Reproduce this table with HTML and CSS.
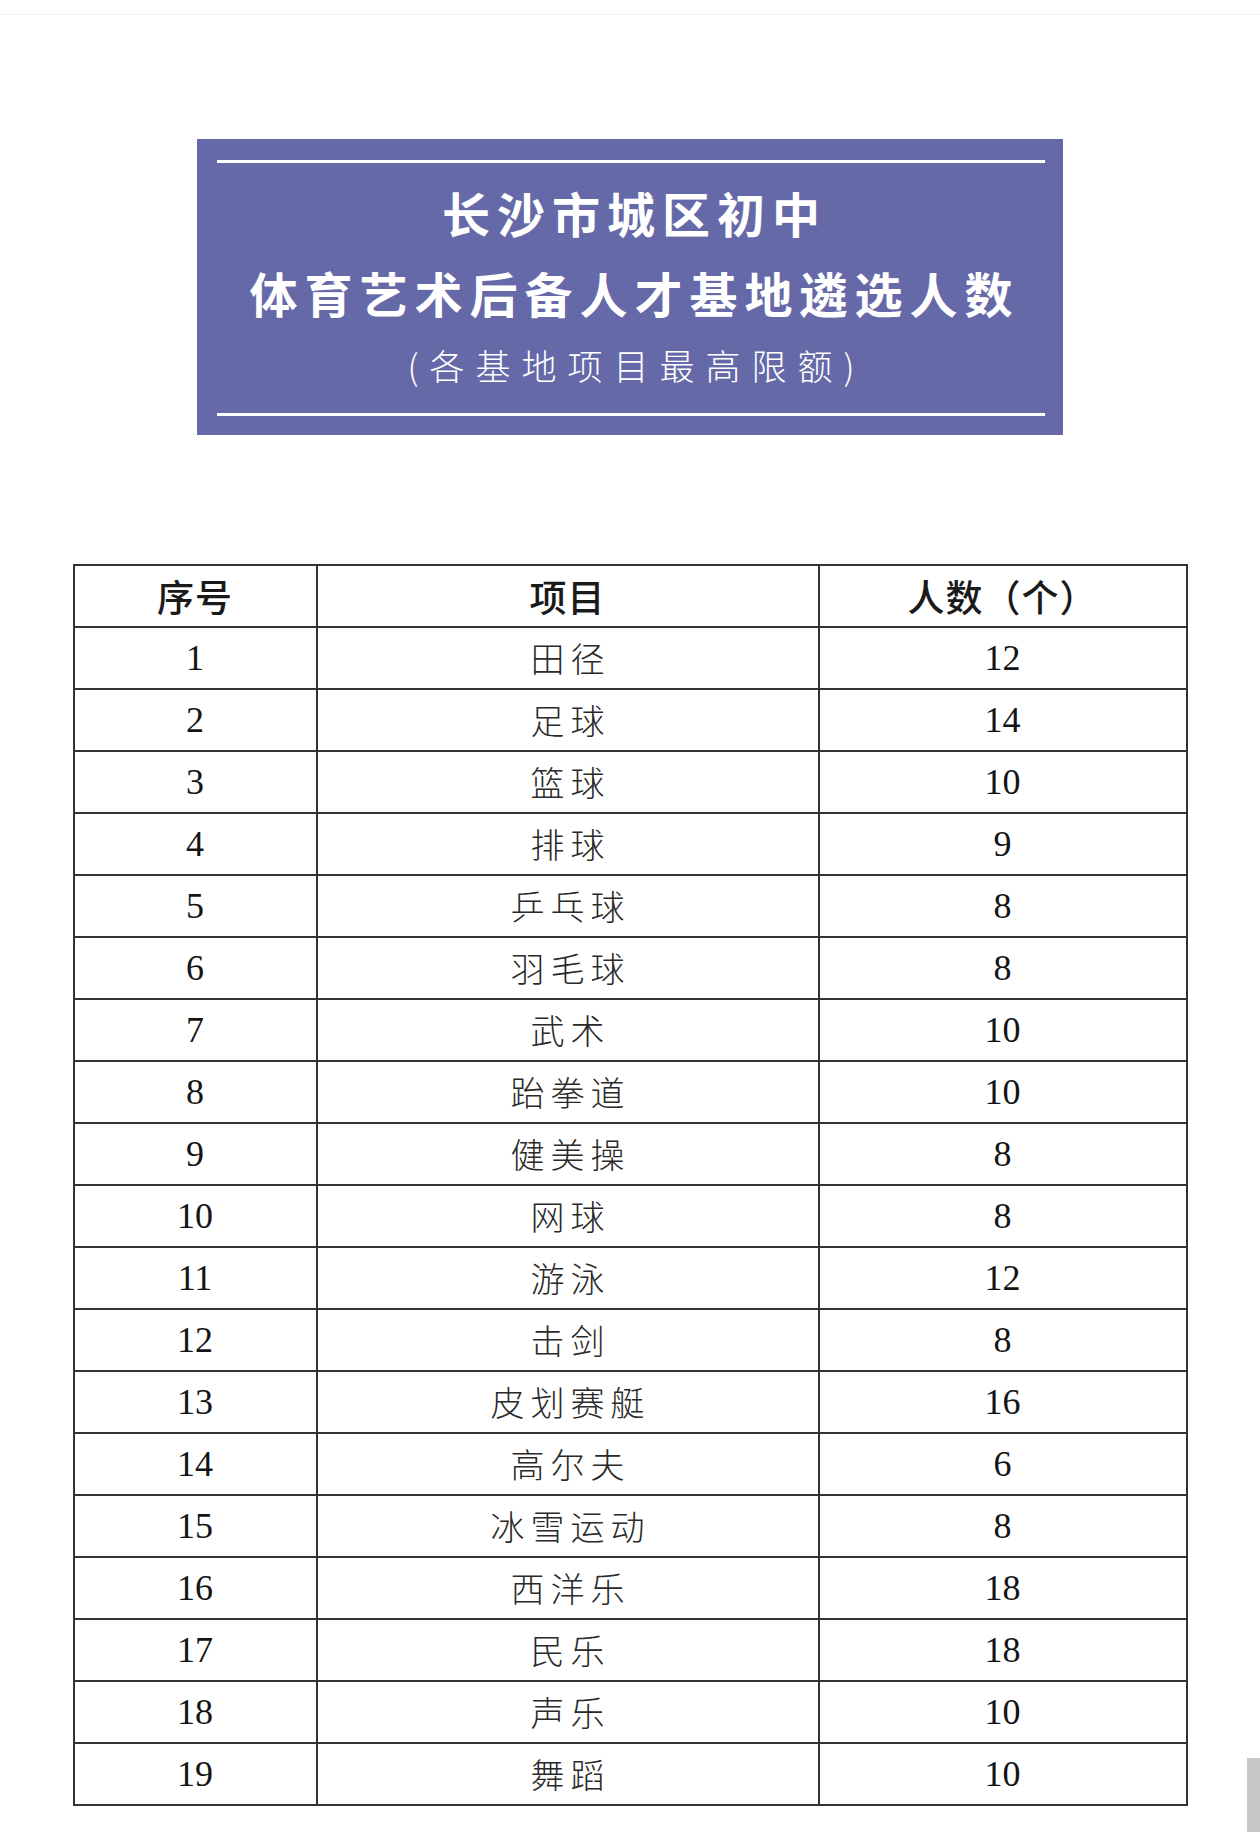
FILE: index.html
```html
<!DOCTYPE html>
<html lang="zh-CN">
<head>
<meta charset="utf-8">
<title>长沙市城区初中体育艺术后备人才基地遴选人数</title>
<link rel="stylesheet" href="styles.css">
</head>
<body>
<div class="topbar"></div>
<main class="page">
  <section class="banner">
    <div class="rule"></div>
    <div class="banner-text">
      <h1 class="title">长沙市城区初中</h1>
      <h1 class="title">体育艺术后备人才基地遴选人数</h1>
      <p class="subtitle">(各基地项目最高限额)</p>
    </div>
    <div class="rule"></div>
  </section>

  <table class="quota">
    <colgroup>
      <col class="c-no">
      <col class="c-item">
      <col class="c-num">
    </colgroup>
    <thead>
      <tr><th>序号</th><th>项目</th><th>人数（个）</th></tr>
    </thead>
    <tbody>
      <tr><td class="n">1</td><td class="t">田径</td><td class="n">12</td></tr>
      <tr><td class="n">2</td><td class="t">足球</td><td class="n">14</td></tr>
      <tr><td class="n">3</td><td class="t">篮球</td><td class="n">10</td></tr>
      <tr><td class="n">4</td><td class="t">排球</td><td class="n">9</td></tr>
      <tr><td class="n">5</td><td class="t">乒乓球</td><td class="n">8</td></tr>
      <tr><td class="n">6</td><td class="t">羽毛球</td><td class="n">8</td></tr>
      <tr><td class="n">7</td><td class="t">武术</td><td class="n">10</td></tr>
      <tr><td class="n">8</td><td class="t">跆拳道</td><td class="n">10</td></tr>
      <tr><td class="n">9</td><td class="t">健美操</td><td class="n">8</td></tr>
      <tr><td class="n">10</td><td class="t">网球</td><td class="n">8</td></tr>
      <tr><td class="n">11</td><td class="t">游泳</td><td class="n">12</td></tr>
      <tr><td class="n">12</td><td class="t">击剑</td><td class="n">8</td></tr>
      <tr><td class="n">13</td><td class="t">皮划赛艇</td><td class="n">16</td></tr>
      <tr><td class="n">14</td><td class="t">高尔夫</td><td class="n">6</td></tr>
      <tr><td class="n">15</td><td class="t">冰雪运动</td><td class="n">8</td></tr>
      <tr><td class="n">16</td><td class="t">西洋乐</td><td class="n">18</td></tr>
      <tr><td class="n">17</td><td class="t">民乐</td><td class="n">18</td></tr>
      <tr><td class="n">18</td><td class="t">声乐</td><td class="n">10</td></tr>
      <tr><td class="n">19</td><td class="t">舞蹈</td><td class="n">10</td></tr>
    </tbody>
  </table>
</main>
<div class="scroll-thumb"></div>
</body>
</html>
```

FILE: styles.css
```css
html, body {
  margin: 0;
  padding: 0;
  background: #ffffff;
}

body {
  font-family: "Noto Sans CJK SC", "Noto Sans", sans-serif;
  color: #1f1f1f;
  overflow: hidden;
}

.topbar {
  height: 14px;
  border-bottom: 1px solid #f0f0f0;
}

.page {
  display: flex;
  flex-direction: column;
  align-items: center;
}

.banner {
  width: 866px;
  margin-top: 124px;
  background: #6669a8;
  padding: 21px 18px 19px 20px;
  box-sizing: border-box;
  display: flex;
  flex-direction: column;
}

.rule {
  height: 3px;
  background: #ffffff;
}

.banner-text {
  padding: 9px 0 15px;
  display: flex;
  flex-direction: column;
  align-items: center;
  color: #ffffff;
}

.title {
  margin: 0;
  font-size: 48px;
  font-weight: 700;
  line-height: 80px;
  letter-spacing: 7px;
  padding-left: 7px;
}

.subtitle {
  margin: 0;
  font-size: 35px;
  font-weight: 300;
  line-height: 66px;
  letter-spacing: 11px;
  padding-left: 11px;
}

.quota {
  margin-top: 129px;
  width: 1113px;
  border-collapse: collapse;
  table-layout: fixed;
}

.c-no { width: 243px; }
.c-item { width: 502px; }
.c-num { width: 368px; }

.quota th,
.quota td {
  border: 2px solid #333333;
  height: 60px;
  padding: 0;
  text-align: center;
  vertical-align: middle;
}

.quota th {
  font-size: 37px;
  font-weight: 500;
  color: #1a1a1a;
  letter-spacing: 1px;
  line-height: 1;
}

.quota td.n {
  font-family: "Liberation Serif", "Times New Roman", serif;
  font-size: 36px;
  color: #141414;
  line-height: 1;
}

.quota td.t {
  font-size: 34px;
  font-weight: 300;
  color: #2a2a2a;
  letter-spacing: 6px;
  padding-left: 6px;
  line-height: 1;
}

.scroll-thumb {
  position: fixed;
  right: 0;
  bottom: 0;
  width: 13px;
  height: 74px;
  background: #c7c7c7;
}
```
